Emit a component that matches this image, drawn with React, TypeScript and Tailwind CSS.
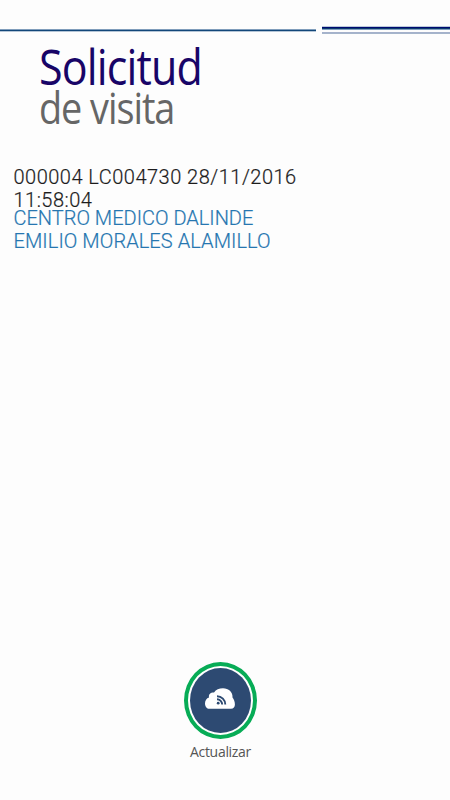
import React from 'react';

const request = {
  header: '000004 LC004730 28/11/2016 11:58:04',
  hospital: 'CENTRO MEDICO DALINDE',
  doctor: 'EMILIO MORALES ALAMILLO',
};

function CloudIcon() {
  return (
    <svg viewBox="0 0 30 22" className="h-[22px] w-[30px]">
      <path
        d="M4.500 20.800C1.800 20.800 0 18.500 0 15.500C0 12.500 1.500 10.300 4 9.500C3.500 6.500 5 4.500 9 4.500C11 1.500 14 .2 18 .2C23.500 .2 28 4 27.500 9.500C29 11.500 29.900 13.500 29.900 16.500C29.900 19 28.500 20.800 26 20.800Z"
        fill="#fff"
      />
      <circle cx="13.200" cy="15.200" r="1.400" fill="#2d4a72" />
      <path d="M12 11.300a5.200 5.200 0 0 1 5.200 5.200M12 8.200a8.300 8.300 0 0 1 8.300 8.300" fill="none" stroke="#2d4a72" strokeWidth="1.900" />
    </svg>
  );
}

export default function App() {
  return (
    <div className="flex h-[800px] w-[450px] flex-col bg-[#fdfdfd]">
      {/* Header lines */}
      <div className="flex h-[44px] items-start justify-between pt-[26px]">
        <div className="mt-[3px] w-[316px]">
          <div className="h-px bg-[#7f9dbb]" />
          <div className="h-px bg-[#124679]" />
          <div className="h-px bg-[#b4c5d6]" />
        </div>
        <div className="w-[128px]">
          <div className="h-px bg-[#bccbdb]" />
          <div className="h-px bg-[#000a70]" />
          <div className="h-px bg-[#093a6e]" />
          <div className="h-px bg-[#7f9dbd]" />
          <div className="mt-[2px] h-px bg-[#a5b1cb]" />
          <div className="h-px bg-[#a5b5cb]" />
        </div>
      </div>

      {/* Title */}
      <h1 className="h-[122px] pl-[38.500px] font-['Open_Sans',sans-serif]">
        <span className="block origin-left scale-x-[0.86] text-[50px] leading-[44px] tracking-[-1px] text-[#180567]">Solicitud</span>
        <span className="block origin-left scale-x-[0.88] text-[43px] leading-[40px] tracking-[-1.2px] text-[#666]">de visita</span>
      </h1>

      {/* Request */}
      <div className="w-[310px] flex-1 pl-[13.500px] font-[Roboto,sans-serif] text-[20px] font-light leading-[23px] [-webkit-text-stroke:0.2px]">
        <p className="tracking-[0.49px] text-[#1c1c1c]">{request.header}</p>
        <div className="-mt-[5px] text-[#2676b0]">
          <p>{request.hospital}</p>
          <p className="tracking-[0.08px]">{request.doctor}</p>
        </div>
      </div>

      {/* Refresh */}
      <button className="mb-[39px] ml-[184px] flex w-[73px] flex-col items-center">
        <span className="flex h-[77px] w-[73px] items-center justify-center rounded-[50%] border-4 border-[#07ac56] bg-white p-[2px]">
          <span className="flex size-full items-center justify-center rounded-[50%] bg-[#2d4a72] pr-px pb-[3px]">
            <CloudIcon />
          </span>
        </span>
        <span className="mt-1 font-['Open_Sans',sans-serif] text-[14px] leading-[18px] tracking-[-0.3px] text-[#555]">Actualizar</span>
      </button>
    </div>
  );
}
